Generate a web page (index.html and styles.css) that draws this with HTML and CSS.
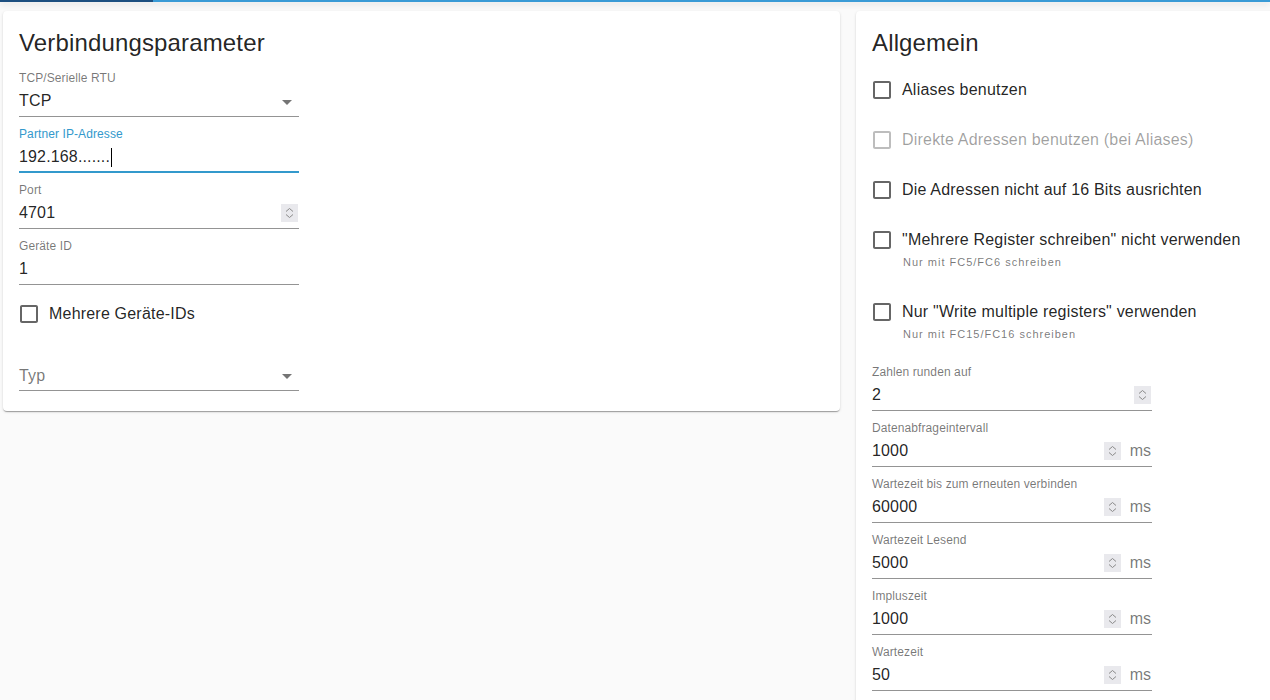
FILE: index.html
```html
<!DOCTYPE html>
<html lang="de">
<head>
<meta charset="utf-8">
<title>Modbus</title>
<link rel="stylesheet" href="styles.css">
</head>
<body>
<div class="topbar"><div class="topbar-dark"></div></div>
<main class="layout">
  <section class="card card-left">
    <h2 class="card-title">Verbindungsparameter</h2>
    <div class="fields">
      <div class="field">
        <div class="label">TCP/Serielle RTU</div>
        <div class="control"><span class="value">TCP</span>
          <svg class="arrow" viewBox="0 0 24 24" width="24" height="24"><path d="M7 10l5 5 5-5z"/></svg>
        </div>
      </div>
      <div class="field focused">
        <div class="label">Partner IP-Adresse</div>
        <div class="control"><span class="value">192.168.......</span><span class="caret"></span></div>
      </div>
      <div class="field">
        <div class="label">Port</div>
        <div class="control"><span class="value">4701</span>
          <svg class="spin" viewBox="0 0 17 18" width="17" height="18"><rect width="17" height="18" fill="#e9e9ed"/><path d="M5 7.5l3.5-3 3.5 3M5 10.5l3.5 3 3.5-3" fill="none" stroke="#8a8a8a" stroke-width="1"/></svg>
        </div>
      </div>
      <div class="field">
        <div class="label">Geräte ID</div>
        <div class="control"><span class="value">1</span></div>
      </div>
    </div>
    <div class="check check-left">
      <div class="check-row">
        <svg class="box" viewBox="0 0 24 24" width="24" height="24"><path d="M19 5v14H5V5h14m0-2H5c-1.1 0-2 .9-2 2v14c0 1.1.9 2 2 2h14c1.1 0 2-.9 2-2V5c0-1.1-.9-2-2-2z"/></svg>
        <span class="check-text">Mehrere Geräte-IDs</span>
      </div>
    </div>
    <div class="field field-typ">
      <div class="label label-empty"></div>
      <div class="control"><span class="value placeholder">Typ</span>
        <svg class="arrow" viewBox="0 0 24 24" width="24" height="24"><path d="M7 10l5 5 5-5z"/></svg>
      </div>
    </div>
  </section>

  <section class="card card-right">
    <h2 class="card-title">Allgemein</h2>
    <div class="checklist">
      <div class="check">
        <div class="check-row">
          <svg class="box" viewBox="0 0 24 24" width="24" height="24"><path d="M19 5v14H5V5h14m0-2H5c-1.1 0-2 .9-2 2v14c0 1.1.9 2 2 2h14c1.1 0 2-.9 2-2V5c0-1.1-.9-2-2-2z"/></svg>
          <span class="check-text">Aliases benutzen</span>
        </div>
      </div>
      <div class="check disabled">
        <div class="check-row">
          <svg class="box" viewBox="0 0 24 24" width="24" height="24"><path d="M19 5v14H5V5h14m0-2H5c-1.1 0-2 .9-2 2v14c0 1.1.9 2 2 2h14c1.1 0 2-.9 2-2V5c0-1.1-.9-2-2-2z"/></svg>
          <span class="check-text">Direkte Adressen benutzen (bei Aliases)</span>
        </div>
      </div>
      <div class="check">
        <div class="check-row">
          <svg class="box" viewBox="0 0 24 24" width="24" height="24"><path d="M19 5v14H5V5h14m0-2H5c-1.1 0-2 .9-2 2v14c0 1.1.9 2 2 2h14c1.1 0 2-.9 2-2V5c0-1.1-.9-2-2-2z"/></svg>
          <span class="check-text">Die Adressen nicht auf 16 Bits ausrichten</span>
        </div>
      </div>
      <div class="check">
        <div class="check-row">
          <svg class="box" viewBox="0 0 24 24" width="24" height="24"><path d="M19 5v14H5V5h14m0-2H5c-1.1 0-2 .9-2 2v14c0 1.1.9 2 2 2h14c1.1 0 2-.9 2-2V5c0-1.1-.9-2-2-2z"/></svg>
          <span class="check-text">"Mehrere Register schreiben" nicht verwenden</span>
        </div>
        <div class="check-sub">Nur mit FC5/FC6 schreiben</div>
      </div>
      <div class="check">
        <div class="check-row">
          <svg class="box" viewBox="0 0 24 24" width="24" height="24"><path d="M19 5v14H5V5h14m0-2H5c-1.1 0-2 .9-2 2v14c0 1.1.9 2 2 2h14c1.1 0 2-.9 2-2V5c0-1.1-.9-2-2-2z"/></svg>
          <span class="check-text">Nur "Write multiple registers" verwenden</span>
        </div>
        <div class="check-sub">Nur mit FC15/FC16 schreiben</div>
      </div>
    </div>
    <div class="fields fields-right">
      <div class="field">
        <div class="label">Zahlen runden auf</div>
        <div class="control"><span class="value">2</span>
          <svg class="spin" viewBox="0 0 17 18" width="17" height="18"><rect width="17" height="18" fill="#e9e9ed"/><path d="M5 7.5l3.5-3 3.5 3M5 10.5l3.5 3 3.5-3" fill="none" stroke="#8a8a8a" stroke-width="1"/></svg>
        </div>
      </div>
      <div class="field">
        <div class="label">Datenabfrageintervall</div>
        <div class="control"><span class="value">1000</span>
          <svg class="spin" viewBox="0 0 17 18" width="17" height="18"><rect width="17" height="18" fill="#e9e9ed"/><path d="M5 7.5l3.5-3 3.5 3M5 10.5l3.5 3 3.5-3" fill="none" stroke="#8a8a8a" stroke-width="1"/></svg>
          <span class="unit">ms</span>
        </div>
      </div>
      <div class="field">
        <div class="label">Wartezeit bis zum erneuten verbinden</div>
        <div class="control"><span class="value">60000</span>
          <svg class="spin" viewBox="0 0 17 18" width="17" height="18"><rect width="17" height="18" fill="#e9e9ed"/><path d="M5 7.5l3.5-3 3.5 3M5 10.5l3.5 3 3.5-3" fill="none" stroke="#8a8a8a" stroke-width="1"/></svg>
          <span class="unit">ms</span>
        </div>
      </div>
      <div class="field">
        <div class="label">Wartezeit Lesend</div>
        <div class="control"><span class="value">5000</span>
          <svg class="spin" viewBox="0 0 17 18" width="17" height="18"><rect width="17" height="18" fill="#e9e9ed"/><path d="M5 7.5l3.5-3 3.5 3M5 10.5l3.5 3 3.5-3" fill="none" stroke="#8a8a8a" stroke-width="1"/></svg>
          <span class="unit">ms</span>
        </div>
      </div>
      <div class="field">
        <div class="label">Impluszeit</div>
        <div class="control"><span class="value">1000</span>
          <svg class="spin" viewBox="0 0 17 18" width="17" height="18"><rect width="17" height="18" fill="#e9e9ed"/><path d="M5 7.5l3.5-3 3.5 3M5 10.5l3.5 3 3.5-3" fill="none" stroke="#8a8a8a" stroke-width="1"/></svg>
          <span class="unit">ms</span>
        </div>
      </div>
      <div class="field">
        <div class="label">Wartezeit</div>
        <div class="control"><span class="value">50</span>
          <svg class="spin" viewBox="0 0 17 18" width="17" height="18"><rect width="17" height="18" fill="#e9e9ed"/><path d="M5 7.5l3.5-3 3.5 3M5 10.5l3.5 3 3.5-3" fill="none" stroke="#8a8a8a" stroke-width="1"/></svg>
          <span class="unit">ms</span>
        </div>
      </div>
    </div>
  </section>
</main>
</body>
</html>
```

FILE: styles.css
```css
* { box-sizing: border-box; }

html, body {
  margin: 0;
  padding: 0;
  height: 100%;
  overflow: hidden;
}

body {
  background: #fafafa;
  font-family: "Liberation Sans", Arial, sans-serif;
  color: rgba(0, 0, 0, 0.87);
}

.topbar {
  height: 2px;
  background: #3a9bd6;
  display: flex;
  box-shadow: 0 2px 6px rgba(0, 0, 0, 0.18);
}

.topbar-dark {
  width: 153px;
  background: #1d4f80;
}

.layout {
  display: flex;
  align-items: flex-start;
  gap: 16px;
  padding: 9px 0 0 3px;
}

.card {
  background: #fff;
  border-radius: 4px;
  box-shadow: 0 2px 1px -1px rgba(0, 0, 0, 0.2), 0 1px 1px 0 rgba(0, 0, 0, 0.14), 0 1px 3px 0 rgba(0, 0, 0, 0.12);
  padding: 16px 16px 20px 16px;
  flex-shrink: 0;
}

.card-left { width: 837px; }
.card-right { width: 430px; height: 720px; }

.card-title {
  margin: 0;
  font-size: 24px;
  line-height: 32px;
  font-weight: 400;
  letter-spacing: 0.15px;
  color: rgba(0, 0, 0, 0.87);
}

.fields {
  margin-top: 2px;
}

.fields-right {
  margin-top: 0;
}

.field {
  width: 280px;
  padding-top: 10px;
}

.label {
  font-size: 12px;
  line-height: 14px;
  height: 14px;
  letter-spacing: 0.1px;
  color: rgba(0, 0, 0, 0.54);
  white-space: nowrap;
}

.control {
  margin-top: 6px;
  height: 26px;
  padding-bottom: 5px;
  display: flex;
  align-items: center;
  border-bottom: 1px solid rgba(0, 0, 0, 0.42);
}

.value {
  font-size: 16px;
  line-height: 20px;
  letter-spacing: 0.15px;
  color: rgba(0, 0, 0, 0.87);
  flex: 1;
  white-space: nowrap;
}

.placeholder {
  color: rgba(0, 0, 0, 0.54);
  margin-top: 2px;
}

.focused .label { color: #3399cc; }
.focused .control {
  border-bottom: 2px solid #3399cc;
  padding-bottom: 4px;
}
.focused .value { flex: 0 0 auto; }

.caret {
  width: 1px;
  height: 19px;
  background: #000;
  margin-left: 1px;
  flex-shrink: 0;
}

.arrow {
  fill: rgba(0, 0, 0, 0.54);
  flex-shrink: 0;
  margin-top: 2px;
}

.spin {
  flex-shrink: 0;
  margin-right: 1px;
}

.unit {
  font-size: 16px;
  line-height: 20px;
  color: rgba(0, 0, 0, 0.54);
  margin-left: 8px;
  margin-right: 1px;
}

.checklist {
  margin-top: 10px;
  display: flex;
  flex-direction: column;
  gap: 8px;
}

.check-left {
  margin-top: 8px;
}

.check-row {
  height: 42px;
  display: flex;
  align-items: center;
}

.box {
  fill: rgba(0, 0, 0, 0.6);
  margin-left: -2px;
  flex-shrink: 0;
}

.check-text {
  margin-left: 8px;
  font-size: 16px;
  line-height: 20px;
  letter-spacing: 0.2px;
  color: rgba(0, 0, 0, 0.87);
  white-space: nowrap;
}

.disabled .box { fill: rgba(0, 0, 0, 0.26); }
.disabled .check-text { color: rgba(0, 0, 0, 0.38); }

.check-sub {
  margin: -6px 0 14px 31px;
  font-size: 11px;
  line-height: 14px;
  letter-spacing: 1px;
  color: rgba(0, 0, 0, 0.54);
  white-space: nowrap;
}
```
